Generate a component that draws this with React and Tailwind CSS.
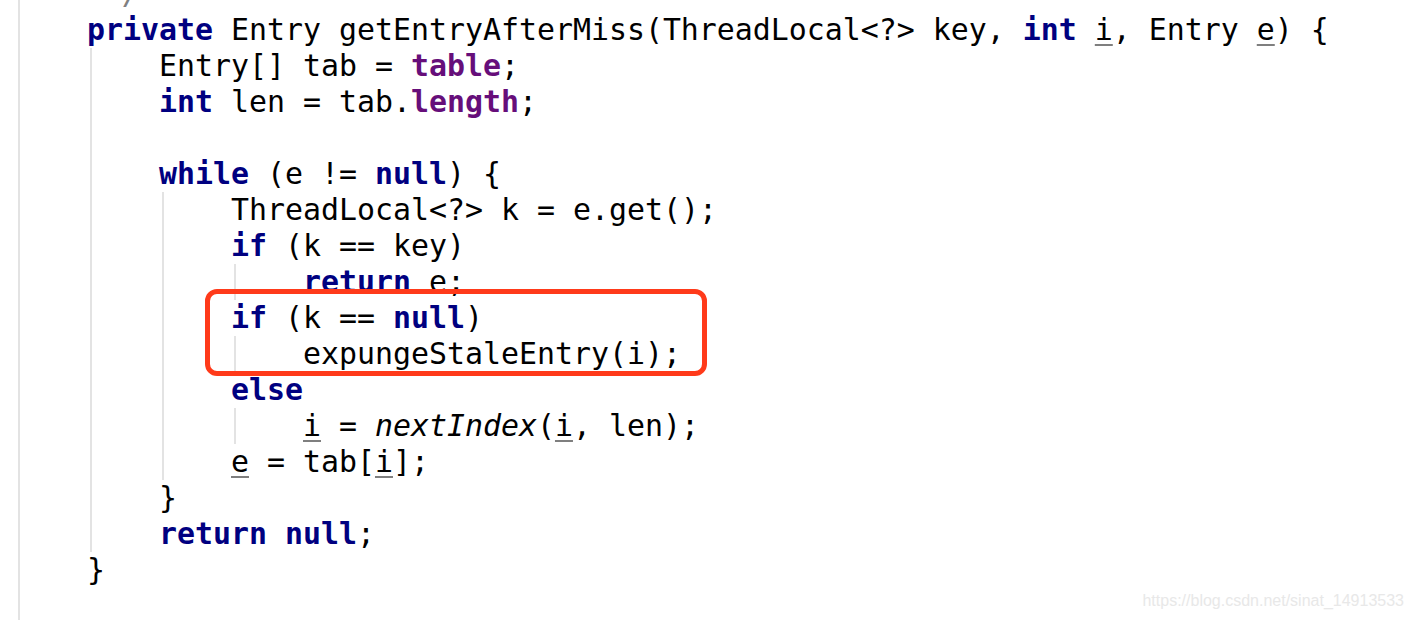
import React from "react";

const K = ({ children }) => (
  <span className="font-bold text-[#000080]">{children}</span>
);
const F = ({ children }) => (
  <span className="font-bold text-[#660e7a]">{children}</span>
);
const U = ({ children }) => (
  <span className="underline decoration-[#7f7f7f] decoration-[2px] underline-offset-[4px]">
    {children}
  </span>
);
const I = ({ children }) => <span className="italic">{children}</span>;

const lines = [
  { level: 1, content: <span className="italic text-[#808080]">{" */"}</span> },
  {
    level: 1,
    content: (
      <>
        <K>private</K> Entry getEntryAfterMiss(ThreadLocal&lt;?&gt; key, <K>int</K> <U>i</U>, Entry <U>e</U>) {"{"}
      </>
    ),
  },
  { level: 2, content: <>Entry[] tab = <F>table</F>;</> },
  { level: 2, content: <><K>int</K> len = tab.<F>length</F>;</> },
  { level: 2, content: null },
  { level: 2, content: <><K>while</K> (e != <K>null</K>) {"{"}</> },
  { level: 3, content: <>ThreadLocal&lt;?&gt; k = e.get();</> },
  { level: 3, content: <><K>if</K> (k == key)</> },
  { level: 4, content: <><K>return</K> e;</> },
  { level: 3, content: <><K>if</K> (k == <K>null</K>)</> },
  { level: 4, content: <>expungeStaleEntry(i);</> },
  { level: 3, content: <K>else</K> },
  { level: 4, content: <><U>i</U> = <I>nextIndex</I>(<U>i</U>, len);</> },
  { level: 3, content: <><U>e</U> = tab[<U>i</U>];</> },
  { level: 2, content: <>{"}"}</> },
  { level: 2, content: <><K>return</K> <K>null</K>;</> },
  { level: 1, content: <>{"}"}</> },
];

const Guides = ({ level }) =>
  Array.from({ length: level }).map((_, i) => (
    <div key={i} className="flex h-full w-[72px] shrink-0">
      <div className="ml-[3px] h-full w-[2px] bg-[#e3e3e3]" />
    </div>
  ));

export default function App() {
  return (
    <div className="relative h-[620px] w-[1414px] overflow-hidden bg-white">
      <div
        className="flex h-[644px] flex-col text-[29.9px] text-black mt-[-24px]"
        style={{ fontFamily: '"DejaVu Sans Mono", "Liberation Mono", monospace' }}
      >
        {lines.map((l, idx) => (
          <div key={idx} className="flex h-[36px] shrink-0 items-stretch pl-[15px]">
            <Guides level={l.level} />
            {l.content && (
              <span className="whitespace-pre leading-[36px]">{l.content}</span>
            )}
          </div>
        ))}
        <div className="flex flex-1 items-stretch pl-[15px]">
          <Guides level={1} />
        </div>
      </div>

      <div className="absolute left-[205px] top-[289px] h-[87px] w-[502px] rounded-[12px] border-[5px] border-[#ff3a1a]" />

      <div
        className="absolute right-[10px] top-[592px] text-[16px] leading-[18px] text-[#e8e8e8]"
        style={{ fontFamily: '"Liberation Sans", Arial, sans-serif' }}
      >
        https://blog.csdn.net/sinat_14913533
      </div>
    </div>
  );
}
